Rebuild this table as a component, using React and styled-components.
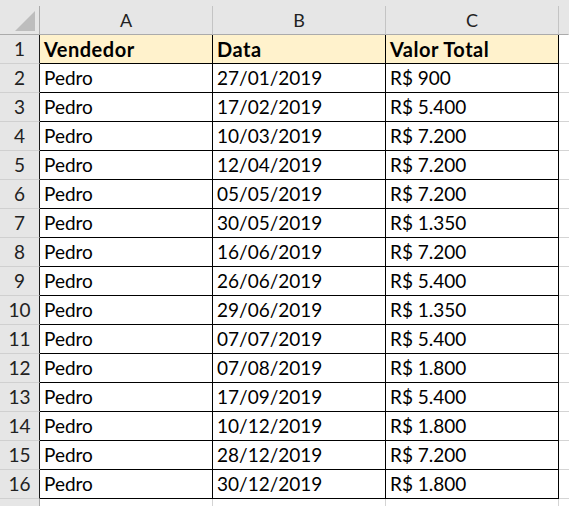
import React from "react";
import styled, { createGlobalStyle } from "styled-components";

const GlobalStyle = createGlobalStyle`
  html, body {
    margin: 0;
    padding: 0;
    background: #ffffff;
    overflow: hidden;
  }
  body {
    font-family: Lato, "Open Sans", sans-serif;
  }
`;

const Sheet = styled.div`
  width: 569px;
  height: 506px;
  overflow: hidden;
  background: #e6e6e6;
  padding-top: 6px;
  box-sizing: border-box;
`;

const Grid = styled.div`
  display: grid;
  grid-template-columns: 40px 173px 173px 173px 1fr;
  grid-auto-rows: 29px;
  background: #ffffff;
`;

const Corner = styled.div`
  box-sizing: border-box;
  background: #e6e6e6;
  border-right: 1px solid #ababab;
  border-bottom: 1px solid #ababab;
  display: flex;
  align-items: flex-end;
  justify-content: flex-end;
  padding: 0 4px 3px 0;
`;

const ColHead = styled.div`
  box-sizing: border-box;
  background: #e6e6e6;
  border-right: 1px solid ${(p) => (p.$last ? "transparent" : "#c4c4c4")};
  border-bottom: 1px solid #ababab;
  text-align: center;
  font-size: 18px;
  line-height: 28px;
  color: #222222;
`;

const RowHead = styled.div`
  box-sizing: border-box;
  background: #e6e6e6;
  border-right: 1px solid ${(p) => (p.$edge ? "#1a1a1a" : "#ababab")};
  border-bottom: 1px solid #d0d0d0;
  text-align: center;
  font-size: 19px;
  line-height: 28px;
  color: #222222;
`;

const Cell = styled.div`
  box-sizing: border-box;
  background: ${(p) => (p.$head ? "#fff2cc" : "#ffffff")};
  border-right: 1px solid ${(p) => (p.$ruled ? "#000000" : "#d4d4d4")};
  border-bottom: 1px solid ${(p) => (p.$ruled ? "#000000" : "#d4d4d4")};
  padding-left: 4px;
  font-size: ${(p) => (p.$head ? "20px" : "19px")};
  letter-spacing: ${(p) => (p.$head ? "0.5px" : "0")};
  line-height: 28px;
  font-weight: ${(p) => (p.$head ? 700 : 400)};
  color: #000000;
  white-space: nowrap;
  overflow: hidden;
`;

const Spare = styled.div`
  box-sizing: border-box;
  background: #ffffff;
  border-bottom: 1px solid #d4d4d4;
`;

const rows = [
  ["27/01/2019", "R$ 900"],
  ["17/02/2019", "R$ 5.400"],
  ["10/03/2019", "R$ 7.200"],
  ["12/04/2019", "R$ 7.200"],
  ["05/05/2019", "R$ 7.200"],
  ["30/05/2019", "R$ 1.350"],
  ["16/06/2019", "R$ 7.200"],
  ["26/06/2019", "R$ 5.400"],
  ["29/06/2019", "R$ 1.350"],
  ["07/07/2019", "R$ 5.400"],
  ["07/08/2019", "R$ 1.800"],
  ["17/09/2019", "R$ 5.400"],
  ["10/12/2019", "R$ 1.800"],
  ["28/12/2019", "R$ 7.200"],
  ["30/12/2019", "R$ 1.800"],
];

export default function App() {
  return (
    <>
      <GlobalStyle />
      <Sheet>
        <Grid>
          <Corner>
            <svg width="20" height="20" viewBox="0 0 20 20">
              <polygon points="20,0 20,20 0,20" fill="#bdbdbd" />
            </svg>
          </Corner>
          <ColHead>A</ColHead>
          <ColHead>B</ColHead>
          <ColHead>C</ColHead>
          <ColHead $last />

          <RowHead $edge>1</RowHead>
          <Cell $head $ruled>Vendedor</Cell>
          <Cell $head $ruled>Data</Cell>
          <Cell $head $ruled>Valor Total</Cell>
          <Spare />

          {rows.map(([date, value], i) => (
            <React.Fragment key={i}>
              <RowHead $edge>{i + 2}</RowHead>
              <Cell $ruled>Pedro</Cell>
              <Cell $ruled>{date}</Cell>
              <Cell $ruled>{value}</Cell>
              <Spare />
            </React.Fragment>
          ))}

          {/* row 17 is only a sliver at the bottom edge, its number falls below the window */}
          <RowHead />
          <Cell />
          <Cell />
          <Cell />
          <Spare />
        </Grid>
      </Sheet>
    </>
  );
}
